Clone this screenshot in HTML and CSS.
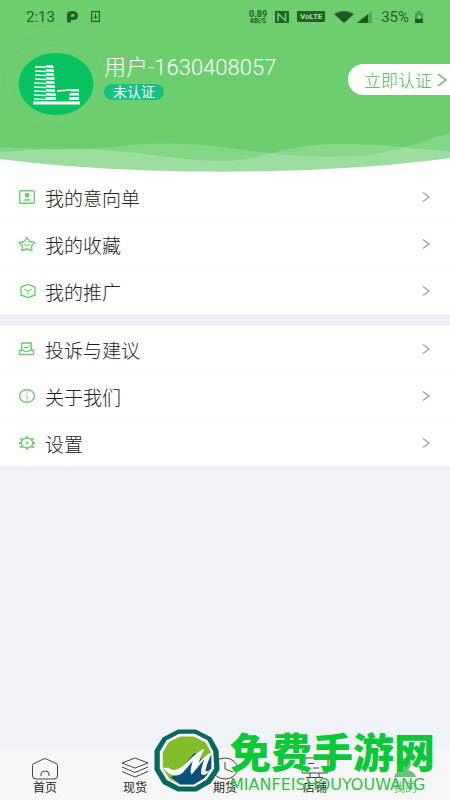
FILE: index.html
```html
<!DOCTYPE html>
<html lang="zh-CN">
<head>
    <meta charset="UTF-8">
    <meta name="viewport" content="width=device-width, initial-scale=1.0">
    <title>我的</title>
    <link rel="stylesheet" href="styles.css">
</head>
<body>
    <header class="header">
        <svg class="rings" width="112" height="104" viewBox="0 0 112 104" fill="none" stroke="#76d078">
            <ellipse cx="50" cy="53" rx="44" ry="36"/>
            <ellipse cx="50" cy="53" rx="49" ry="40"/>
            <ellipse cx="50" cy="50" rx="54" ry="47"/>
        </svg>
        <svg class="waves" viewBox="0 0 450 44" preserveAspectRatio="none">
            <path d="M0 17 Q45 20 90 19 C125 16 150 12 185 14 C240 16 270 27 330 27 C390 27 410 14 450 3 V44 H0Z" fill="#fff" fill-opacity=".16"/>
            <path d="M0 22 C30 20 60 18 90 19 C145 22 180 31 225 31 C265 30 280 14 345 14 C390 14 415 20 450 21 V44 H0Z" fill="#fff" fill-opacity=".2"/>
            <path d="M0 29 C130 46 320 46 450 28 V44 H0Z" fill="#fff"/>
        </svg>

        <div class="status-bar">
            <span class="time">2:13</span>
            <svg width="11" height="12" viewBox="0 0 11 12"><path d="M0 11V4Q0 0 5 0H7Q11 1 11 4.500Q11 9 6 9H4V11Q2 12.500 0 11Z" fill="#235f29"/><path d="M4 6V4Q5 3 6.500 3T7.500 5Q7 6 4 6Z" fill="#6dce70"/></svg>
            <svg class="download" width="9" height="11" viewBox="0 0 9 11" fill="none" stroke="#235f29"><rect x=".6" y=".6" width="7.800" height="9.800" stroke-width="1.200"/><path d="M4.500 2.500V7M2.500 5.500L4.500 7.500L6.500 5.500"/></svg>
            <span class="speed"><b>0.89</b><small>KB/S</small></span>
            <svg class="nfc" width="14" height="12" viewBox="0 0 14 12"><rect width="14" height="12" rx="1" fill="#235f29"/><path d="M3 10V2.500L10.500 9.500V2" fill="none" stroke="#6dce70" stroke-width="1.600"/></svg>
            <span class="volte">VoLTE</span>
            <svg class="wifi" width="20" height="12" viewBox="0 0 20 12"><path d="M0 3Q10-3 20 3L10 12Z" fill="#1d5a23"/></svg>
            <svg class="signal" width="15" height="12" viewBox="0 0 15 12"><path d="M0 12L15 0V12Z" fill="#55a65a"/><path d="M0 12L11 3V12Z" fill="#1d5a23"/></svg>
            <span class="percent">35%</span>
            <svg width="8" height="12" viewBox="0 0 8 12"><path d="M0 2H2V0H6V2H8V12H0Z" fill="#4c9b51"/><path d="M0 8H8V12H0Z" fill="#1d5a23"/><path d="M5 2L2 6.500H4V9L6 5H4Z" fill="#8fe091"/></svg>
        </div>

        <div class="profile">
            <svg class="avatar" width="76" height="62" viewBox="0 0 76 62">
                <ellipse cx="38" cy="31" rx="37.500" ry="31" fill="#08c160"/>
                <g fill="#fff">
                    <path d="M28 12L35 12.500L36 15L28 14.500ZM28 16L36 16.500V19L28 18.500ZM28 20L36 20.500V23L28 22.500ZM28 24L36.500 24.500V27L28 26.500ZM28 28L36.500 28.500V31L28 30.500ZM28 32L37 32.500V35L28 34.500ZM28 36L37 36.500V39L28 38.500ZM28 40L38 40.500V43L28 42.500ZM28 44H38V47H28ZM52 36H61V38.500H53ZM52 40H61V42.500H51ZM51 44H61V47H51ZM15 48.500H62V51.500H15Z"/>
                </g>
                <path d="M17 14L28 14M17 18L28 18.500M17 22L28 22.500M17 26L28 26.500M16 30L28 30.500M16 34L28 34.500M16 38L28 38.500M16 42L28 42.500M16 46L28 46.500M39 38L52 37" stroke="#fff" stroke-width="1.300"/>
            </svg>
            <div class="user">
                <h1>用户-1630408057</h1>
                <span class="badge">未认证</span>
            </div>
            <button class="verify" type="button">立即认证
                <svg width="10" height="14" viewBox="0 0 10 14" fill="none" stroke="#4bb650" stroke-width="1.300"><path d="M1 1L9 7L1 13"/></svg>
            </button>
        </div>
    </header>

    <main>
        <nav class="menu">
            <a href="#">
                <svg class="icon" viewBox="0 0 18 16"><rect x="1.700" y="1.700" width="14.600" height="12.600" rx="1"/><circle cx="9" cy="6" r="1.600" fill="#6bcb6e"/><path d="M9 7V9M5.500 11H12.500"/></svg>
                <span>我的意向单</span>
                <svg class="arrow" viewBox="0 0 8 10"><path d="M1 0.500L7 5L1 9.500"/></svg>
            </a>
            <a href="#">
                <svg class="icon" viewBox="0 0 18 16"><path d="M9 1.500L11.500 5.500L17 6.500L13.500 10L14 14.500L9 13L4 14.500L4.500 10L1 6.500L6.500 5.500Z" stroke-linejoin="round"/><path d="M5.500 8.500Q9 10 12.500 8.500" stroke-width="1"/></svg>
                <span>我的收藏</span>
                <svg class="arrow" viewBox="0 0 8 10"><path d="M1 0.500L7 5L1 9.500"/></svg>
            </a>
            <a href="#">
                <svg class="icon" viewBox="0 0 18 16"><path d="M10 1.300L17 4V12L10 14.700L3 12V4Z" stroke-linejoin="round"/><path d="M6 6L10 8L14 6M10 8V12" stroke-width="1"/></svg>
                <span>我的推广</span>
                <svg class="arrow" viewBox="0 0 8 10"><path d="M1 0.500L7 5L1 9.500"/></svg>
            </a>
        </nav>
        <nav class="menu">
            <a href="#">
                <svg class="icon" viewBox="0 0 18 16"><path d="M3.700 8V2H13.300V8M3.500 8L1.500 9.500V13.500H15.500V9.500L13.500 8M1.500 9.500H5.500Q8.500 12 11.500 9.500H15.500" stroke-linejoin="round"/><path d="M6 6.500H10L12 4" stroke-width="1"/></svg>
                <span>投诉与建议</span>
                <svg class="arrow" viewBox="0 0 8 10"><path d="M1 0.500L7 5L1 9.500"/></svg>
            </a>
            <a href="#">
                <svg class="icon" viewBox="0 0 18 16"><ellipse cx="9" cy="8" rx="7.500" ry="6.300"/><path d="M9 4.500V5.500M9 7V11.500" stroke-width="1"/></svg>
                <span>关于我们</span>
                <svg class="arrow" viewBox="0 0 8 10"><path d="M1 0.500L7 5L1 9.500"/></svg>
            </a>
            <a href="#">
                <svg class="icon" viewBox="0 0 18 16"><ellipse cx="9" cy="8" rx="5.800" ry="5"/><path d="M9 1V3M9 13V15M1 8H3M15 8H17M2 3.500L5 4.700M16 3.500L13 4.700M2 12.500L5 11.300M16 12.500L13 11.300" stroke-width="1.800"/><circle cx="9" cy="8" r=".5"/></svg>
                <span>设置</span>
                <svg class="arrow" viewBox="0 0 8 10"><path d="M1 0.500L7 5L1 9.500"/></svg>
            </a>
        </nav>
    </main>

    <footer class="footer">
        <nav class="tabs">
            <a href="#">
                <svg viewBox="0 0 28 24"><path d="M1.500 8.500Q1.500 7 3 6.500L12.500 2Q14 1.200 15.500 2L25 6.500Q26.500 7 26.500 8.500V19Q26.500 22 23 22H5Q1.500 22 1.500 19ZM10 19V17Q10 14 14 14T18 17V19"/></svg>
                首页
            </a>
            <a href="#">
                <svg viewBox="0 0 28 24"><path d="M14 1L27 6L14 11L1 6ZM1 10L14 15.500L27 10M1 14.500L14 20L27 14.500"/></svg>
                现货
            </a>
            <a href="#">
                <svg viewBox="0 0 28 24"><ellipse cx="14" cy="11.500" rx="12.500" ry="10.500"/><path d="M14 5V12L22 15"/></svg>
                期货
            </a>
            <a href="#">
                <svg viewBox="0 0 28 24"><path d="M2 1H26Q27 1 27 2V15Q27 16 26 16H2Q1 16 1 15V2Q1 1 2 1ZM9 16V20M18 16V20M5 20.500H22M7 6.500H13M12 11H18"/></svg>
                店铺
            </a>
            <a class="active" href="#">
                <svg viewBox="0 0 28 24"><path d="M14 1C18 1 20 4 20 7Q20 10 17 13Q24 15 25 20H3Q4 15 11 13Q8 10 8 7C8 4 10 1 14 1Z"/></svg>
                我的
            </a>
        </nav>
        <div class="watermark">
            <svg width="66" height="64" viewBox="0 0 68 68" preserveAspectRatio="none">
                <path d="M25 2H43L58 10L65 23L66 43L57 57L43 65H25L10 57L2 43V23L10 10Z" fill="#06685d" stroke="#06685d" stroke-width="3" stroke-linejoin="round"/>
                <path d="M26 5H42L55 12L61 24L62 42L54 54L42 61H26L13 54L6 42V24L13 12Z" fill="#fff"/>
                <path d="M27 8H41L53 14L59 25V42L52 52L41 59H27L16 53L9 42V25L15 14Z" fill="#80bd28"/>
                <path d="M17 51C31 47 32 33 43 25L45 34L59 25V42L52 52L41 59H27Z" fill="#07527d"/>
                <path d="M9 41Q13 42 15 41Q18 45 23 43C34 40 38 27 52 21Q48 28 46 36Q52 28 61 24Q56 31 53 44Q54 47 59 42Q53 51 49 48Q47 46 52 32L39 48Q36 48 40 34L30 46C23 53 14 48 9 41Z" fill="#fff"/>
            </svg>
            <div class="brand">
                <strong>免费手游网</strong>
                <span>MIANFEISHOUYOUWANG</span>
            </div>
        </div>
    </footer>
</body>
</html>
```
FILE: styles.css
```css
* {
    box-sizing: border-box;
}

body {
    margin: 0;
    min-height: 100vh;
    display: flex;
    flex-direction: column;
    background-color: #eff3f8;
    font-family: Roboto, 'Noto Sans CJK SC', sans-serif;
    color: #222;
}

svg {
    display: block;
    flex: none;
}

a {
    color: inherit;
    text-decoration: none;
}

main {
    flex: 1;
}

/* header */
.header {
    position: relative;
    height: 174px;
    background-color: #6dce70;
    overflow: hidden;
}

.rings {
    position: absolute;
    left: 0;
    top: 26px;
}

.waves {
    position: absolute;
    left: 0;
    bottom: 0;
    width: 100%;
    height: 44px;
}

.status-bar {
    position: relative;
    display: flex;
    align-items: center;
    height: 33px;
    padding: 0 27px 0 26px;
    color: #235f29;
    font-size: 15px;
}

.time {
    margin-right: 12px;
}

.download {
    margin-left: 13px;
}

.speed {
    margin-left: auto;
    text-align: center;
    line-height: 8px;
}

.speed b {
    display: block;
    font-size: 9px;
}

.speed small {
    display: block;
    font-size: 7px;
    font-weight: bold;
    line-height: 6px;
}

.nfc {
    margin-left: 8px;
}

.volte {
    width: 28px;
    margin-left: 8px;
    background-color: #235f29;
    border-radius: 1px;
    color: #a5e4a6;
    font-size: 8px;
    font-weight: bold;
    line-height: 11px;
    text-align: center;
}

.wifi {
    margin-left: 9px;
}

.signal {
    margin-left: 3px;
}

.percent {
    margin: 0 6px 0 9px;
}

.profile {
    position: relative;
    display: flex;
    align-items: flex-start;
    padding: 20px 0 0 18px;
}

.user {
    margin-left: 10px;
}

.user h1 {
    margin: 0 0 2px;
    color: #fff;
    font-size: 22px;
    font-weight: 300;
    line-height: 29px;
}

.badge {
    display: block;
    width: 60px;
    background-color: #15c284;
    border-radius: 8px;
    color: #fff;
    font-size: 14px;
    line-height: 16px;
    text-align: center;
}

.verify {
    display: flex;
    align-items: center;
    gap: 5px;
    height: 31px;
    margin: 11px 0 0 auto;
    padding: 0 3px 0 16px;
    background-color: #fff;
    border: none;
    border-radius: 16px 0 0 16px;
    color: #4bb650;
    font-family: inherit;
    font-size: 17px;
    font-weight: 300;
    cursor: pointer;
}

/* menu */
.menu {
    margin-bottom: 12px;
    background-color: #fff;
}

.menu a {
    display: flex;
    align-items: center;
    height: 47px;
    padding: 0 20px 0 18px;
    border-bottom: 1px solid #f7f7f7;
    font-family: 'Noto Sans CJK SC', sans-serif;
    font-size: 19px;
    font-weight: 300;
}

.menu a:last-child {
    height: 46px;
    border-bottom: none;
}

.menu span {
    flex: 1;
    margin-left: 9px;
}

.icon {
    width: 18px;
    height: 16px;
    fill: none;
    stroke: #6bcb6e;
    stroke-width: 1.4;
}

.arrow {
    width: 8px;
    height: 10px;
    fill: none;
    stroke: #999;
    stroke-width: 1.2;
}

/* bottom bar */
.footer {
    position: relative;
    background-color: #f7f7f7;
}

.tabs {
    display: flex;
    height: 52px;
}

.tabs a {
    flex: 1;
    display: flex;
    flex-direction: column;
    align-items: center;
    padding-top: 9px;
    font-size: 12px;
    line-height: 14px;
}

.tabs svg {
    width: 28px;
    height: 24px;
    fill: none;
    stroke: #444;
    stroke-width: 1;
}

.tabs .active {
    color: #6bc174;
}

.tabs .active svg {
    fill: #6bc174;
    stroke: none;
}

.watermark {
    position: absolute;
    left: 154px;
    bottom: 7px;
    display: flex;
    align-items: flex-end;
    gap: 10px;
    color: #08c936;
    pointer-events: none;
}

.brand strong {
    display: block;
    font-family: 'Noto Sans CJK SC', sans-serif;
    font-size: 41px;
    font-weight: 900;
    line-height: 54px;
    white-space: nowrap;
}

.brand span {
    display: block;
    color: #2fc044;
    font-family: 'DejaVu Sans', sans-serif;
    font-size: 16px;
    line-height: 16px;
}
```
